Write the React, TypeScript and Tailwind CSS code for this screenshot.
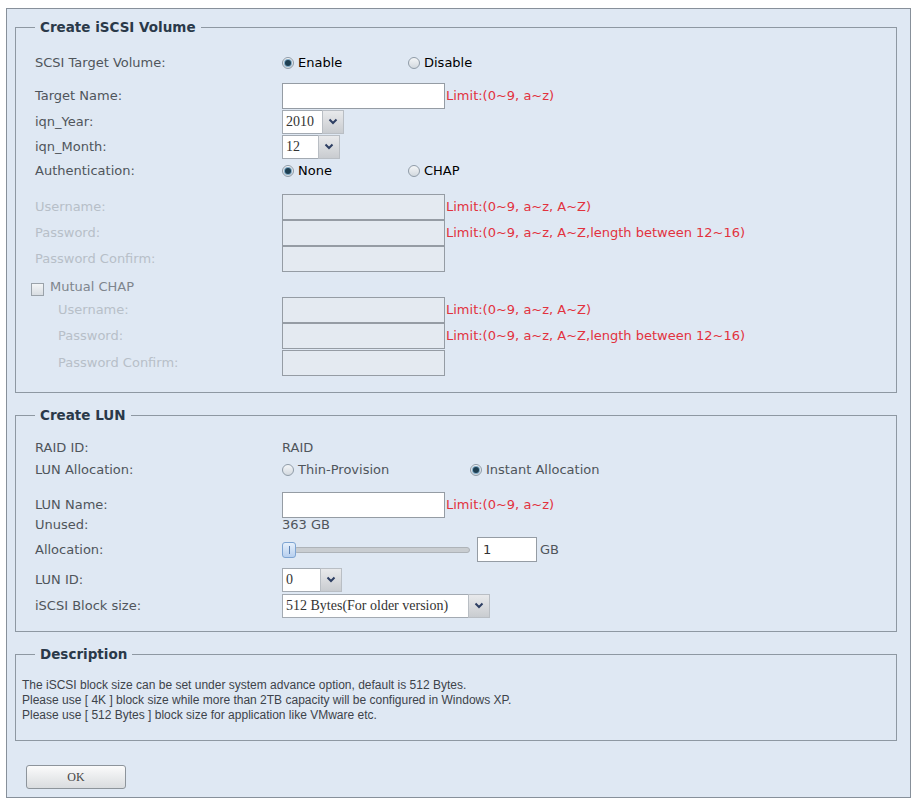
import React from 'react';

const font = "font-['DejaVu_Sans',sans-serif]";

const Radio = ({ checked, label, className = '' }: { checked?: boolean; label: string; className?: string }) => (
  <span className={`flex items-center gap-[4px] ${className}`}>
    <span className="flex h-[12px] w-[12px] items-center justify-center rounded-full border border-[#8f9ba7] bg-gradient-to-b from-[#f4f6f8] to-[#d3d9df]">
      {checked && <span className="h-[6px] w-[6px] rounded-full bg-[#1e3f52] ring-1 ring-[#7fa9c6]" />}
    </span>
    <span>{label}</span>
  </span>
);

const Chevron = () => (
  <svg width="10" height="7" viewBox="0 0 10 7">
    <path d="M1.5 1.5 L5 5 L8.5 1.5" fill="none" stroke="#2e3f63" strokeWidth="2" />
  </svg>
);

const Select = ({ value, box }: { value: string; box: string }) => (
  <div className="flex h-[24px]">
    <div className={`flex items-center border border-r-0 border-[#a3aab2] bg-white pl-[3px] font-['Liberation_Serif',serif] text-[14px] text-[#333] ${box}`}>
      {value}
    </div>
    <div className="flex w-[22px] items-center justify-center border border-[#b9bec4] bg-gradient-to-b from-[#e9eaec] to-[#c9ccd0]">
      <Chevron />
    </div>
  </div>
);

const Input = ({ enabled, className = 'w-[163px]' }: { enabled?: boolean; className?: string }) => (
  <div
    className={`h-[26px] border border-[#959ca4] ${enabled ? 'bg-white' : 'bg-[#e4eaf1]'} ${className}`}
  />
);

const Limit = ({ children }: { children: React.ReactNode }) => (
  <span className="ml-[1px] text-[13px] text-[#e2323e]">{children}</span>
);

const Row = ({
  label,
  h,
  tone = 'text-[#4f555b]',
  indent = false,
  className = '',
  children,
}: {
  label: string;
  h: string;
  tone?: string;
  indent?: boolean;
  className?: string;
  children?: React.ReactNode;
}) => (
  <div className={`flex items-center ${h} ${className}`}>
    <div className={`w-[247px] shrink-0 ${tone} ${indent ? 'pl-[23px]' : ''}`}>{label}</div>
    <div className="flex items-center">{children}</div>
  </div>
);

const Legend = ({ children, className = '' }: { children: React.ReactNode; className?: string }) => (
  <legend className={`px-[5px] text-[13.5px] font-bold leading-[18px] text-[#2a3949] ${className}`}>{children}</legend>
);

export default function App() {
  const off = 'text-[#b7bfc8]';
  return (
    <div className={`min-h-[799px] bg-white pl-[6px] pt-[8px] ${font} text-[13px]`}>
      <div className="h-[790px] w-[905px] border border-[#87909a] bg-[#dfe8f3] pt-[9px]">
        <fieldset className="ml-[8px] mr-[13px] border border-[#8e98a2] px-[19px] pb-[16px] pt-[16px]">
          <Legend>Create iSCSI Volume</Legend>
          <Row label="SCSI Target Volume:" h="h-[22px]">
            <Radio checked label="Enable" className="w-[126px]" />
            <Radio label="Disable" />
          </Row>
          <Row label="Target Name:" h="h-[27px]" className="mt-[8px]">
            <Input enabled />
            <Limit>Limit:(0~9, a~z)</Limit>
          </Row>
          <Row label="iqn_Year:" h="h-[25px]">
            <Select value="2010" box="w-[40px]" />
          </Row>
          <Row label="iqn_Month:" h="h-[25px]">
            <Select value="12" box="w-[36px]" />
          </Row>
          <Row label="Authentication:" h="h-[24px]">
            <Radio checked label="None" className="w-[126px]" />
            <Radio label="CHAP" />
          </Row>
          <Row label="Username:" h="h-[27px]" tone={off} className="mt-[10px]">
            <Input />
            <Limit>Limit:(0~9, a~z, A~Z)</Limit>
          </Row>
          <Row label="Password:" h="h-[26px]" tone={off}>
            <Input />
            <Limit>Limit:(0~9, a~z, A~Z,length between 12~16)</Limit>
          </Row>
          <Row label="Password Confirm:" h="h-[26px]" tone={off}>
            <Input />
          </Row>
          <div className="flex h-[25px] items-end pb-[1px] -ml-[4px] text-[#7e858d]">
            <span className="mr-[6px] h-[13px] w-[13px] border border-[#9aa2aa] bg-gradient-to-b from-[#f3f5f7] to-[#d8dde2]" />
            Mutual CHAP
          </div>
          <Row label="Username:" h="h-[26px]" tone={off} indent>
            <Input />
            <Limit>Limit:(0~9, a~z, A~Z)</Limit>
          </Row>
          <Row label="Password:" h="h-[26px]" tone={off} indent>
            <Input />
            <Limit>Limit:(0~9, a~z, A~Z,length between 12~16)</Limit>
          </Row>
          <Row label="Password Confirm:" h="h-[27px]" tone={off} indent>
            <Input />
          </Row>
        </fieldset>

        <fieldset className="ml-[8px] mr-[13px] mt-[13px] border border-[#8e98a2] px-[19px] pb-[13px] pt-[14px]">
          <Legend>Create LUN</Legend>
          <Row label="RAID ID:" h="h-[20px]">
            <span className="text-[#4f555b]">RAID</span>
          </Row>
          <Row label="LUN Allocation:" h="h-[24px]">
            <Radio label="Thin-Provision" className="w-[188px] text-[#4f555b]" />
            <Radio checked label="Instant Allocation" className="text-[#4f555b]" />
          </Row>
          <Row label="LUN Name:" h="h-[26px]" className="mt-[10px]">
            <Input enabled />
            <Limit>Limit:(0~9, a~z)</Limit>
          </Row>
          <Row label="Unused:" h="h-[14px]" className="leading-[14px]">
            <span className="text-[#4f555b]">363 GB</span>
          </Row>
          <Row label="Allocation:" h="h-[27px]" className="mt-[4px]">
            <div className="flex w-[195px] items-center">
              <span className="z-10 flex h-[16px] w-[14px] items-center justify-center rounded-[3px] border border-[#7ea4d2] bg-gradient-to-b from-[#e6f0fb] to-[#b7cfee]">
                <span className="h-[8px] w-[1px] bg-[#5d82b3]" />
              </span>
              <span className="-ml-[2px] h-[6px] w-[176px] rounded-full border border-[#aeb3b8] bg-[#c9cdd1]" />
            </div>
            <div className="flex h-[25px] w-[60px] items-center border border-[#959ca4] bg-white pl-[5px] text-[#333]">1</div>
            <span className="ml-[3px] text-[#4f555b]">GB</span>
          </Row>
          <Row label="LUN ID:" h="h-[25px]" className="mt-[4px]">
            <Select value="0" box="w-[38px]" />
          </Row>
          <Row label="iSCSI Block size:" h="h-[25px]" className="mt-[1px]">
            <Select value="512 Bytes(For older version)" box="w-[186px]" />
          </Row>
        </fieldset>

        <fieldset className="ml-[8px] mr-[13px] mt-[13px] border border-[#8e98a2] px-[6px] pb-[17px] pt-[15px]">
          <Legend className="ml-[13px]">Description</Legend>
          <div className="font-['Liberation_Sans',sans-serif] text-[12px] leading-[15px] text-[#3d434a]">
            <p>The iSCSI block size can be set under system advance option, default is 512 Bytes.</p>
            <p>Please use [ 4K ] block size while more than 2TB capacity will be configured in Windows XP.</p>
            <p>Please use [ 512 Bytes ] block size for application like VMware etc.</p>
          </div>
        </fieldset>

        <button className="ml-[19px] mt-[24px] flex h-[24px] w-[100px] items-center justify-center rounded-[3px] border border-[#8d949b] bg-gradient-to-b from-[#fbfbfb] to-[#d9dcdf] font-['Liberation_Serif',serif] text-[12px] text-[#444]">
          OK
        </button>
      </div>
    </div>
  );
}
